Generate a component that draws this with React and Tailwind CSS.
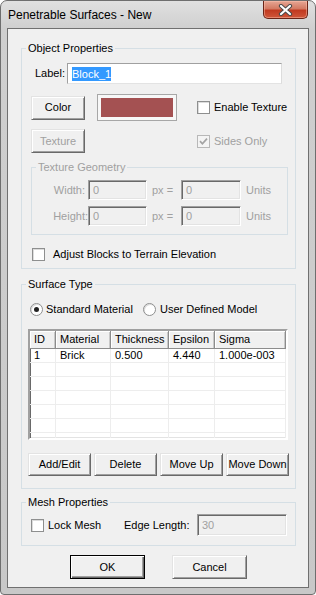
import React from 'react';

// classic win32 bevels
const raised =
  'border border-t-[#e3e3e3] border-l-[#e3e3e3] border-r-[#696969] border-b-[#696969] shadow-[inset_1px_1px_#fff,inset_-1px_-1px_#a0a0a0]';
const sunken =
  'border border-t-[#a0a0a0] border-l-[#a0a0a0] border-r-white border-b-white shadow-[inset_1px_1px_#696969,inset_-1px_-1px_#e3e3e3]';

const Btn = ({ children, className = '', disabled, isDefault }) => (
  <button
    type="button"
    className={`flex shrink-0 items-center justify-center bg-[#f0f0f0] leading-[13px] ${
      isDefault
        ? 'border border-black shadow-[inset_1px_1px_#fff,inset_-1px_-1px_#696969,inset_-2px_-2px_#a0a0a0]'
        : raised
    } ${disabled ? 'text-[#a0a0a0]' : 'text-black'} ${className}`}
  >
    {children}
  </button>
);

const CheckBox = ({ checked, disabled, className = '' }) => (
  <span
    className={`flex h-[13px] w-[13px] shrink-0 items-center justify-center border ${
      disabled ? 'border-[#b8b8b8] bg-[#f4f4f4]' : 'border-[#8e8f8f] bg-white shadow-[inset_1px_1px_#dcdcdc]'
    } ${className}`}
  >
    {checked && (
      <svg width="9" height="9" viewBox="0 0 9 9">
        <path d="M1 4.2 L3.4 6.8 L8 1.6" fill="none" stroke={disabled ? '#a3a3a3' : '#222'} strokeWidth="1.7" />
      </svg>
    )}
  </span>
);

const Radio = ({ checked }) => (
  <span className="flex h-[13px] w-[13px] shrink-0 items-center justify-center rounded-full border border-[#8e8f8f] bg-white shadow-[inset_1px_1px_#dcdcdc]">
    {checked && <span className="h-[5px] w-[5px] rounded-full bg-[#222]" />}
  </span>
);

const Group = ({ title, disabled, className = '', children }) => (
  <div className={`flex shrink-0 flex-col border border-[#d5dfe5] ${className}`}>
    <span
      className={`-mt-[7px] ml-[4px] self-start bg-[#f0f0f0] px-[2px] leading-[13px] ${
        disabled ? 'text-[#a0a0a0]' : 'text-black'
      }`}
    >
      {title}
    </span>
    {children}
  </div>
);

const GrayBox = ({ value, className = '' }) => (
  <div className={`flex shrink-0 items-center bg-[#f0f0f0] pl-[4px] text-[#a0a0a0] ${sunken} ${className}`}>{value}</div>
);

const columns = [
  { name: 'ID', w: 'w-[26px]' },
  { name: 'Material', w: 'w-[55px]' },
  { name: 'Thickness', w: 'w-[58px]' },
  { name: 'Epsilon', w: 'w-[46px]' },
  { name: 'Sigma', w: 'w-[71px]' },
];

const rows = [['1', 'Brick', '0.500', '4.440', '1.000e-003'], [], [], [], [], [], []];

export default function App() {
  return (
    <div className="h-[595px] w-[316px] overflow-hidden bg-white">
      <div className="flex h-[595px] w-[316px] flex-col rounded-t-[7px] rounded-b-[4px] border border-[#6e6e6e] bg-[linear-gradient(180deg,#e0e0e0,#cfcfcf_28px,#c8c8c8)] font-['Liberation_Sans',Arial,sans-serif] text-[11px] text-black">
        {/* Title bar */}
        <div className="flex h-[27px] shrink-0 items-start">
          <span className="pl-[7px] pt-[6px] text-[12px] leading-[16px]">Penetrable Surfaces - New</span>
          <div className="ml-auto mr-[7px] flex h-[18px] w-[45px] items-center justify-center rounded-b-[5px] border border-t-0 border-[#6a2417] bg-[linear-gradient(180deg,#e6a694,#d37a63_45%,#c13a20_55%,#d0563a)] shadow-[inset_0_0_0_1px_rgba(255,200,180,0.45)]">
            <svg width="15" height="12" viewBox="0 0 15 12">
              <path d="M3 2 L12 10 M12 2 L3 10" stroke="#4a4a4a" strokeWidth="4.2" strokeLinecap="round" />
              <path d="M3 2 L12 10 M12 2 L3 10" stroke="#fff" strokeWidth="2.2" strokeLinecap="round" />
            </svg>
          </div>
        </div>

        {/* Client area */}
        <div className="mx-[6px] flex h-[560px] shrink-0 flex-col border border-[#707070] bg-[#f0f0f0]">
          {/* Object Properties */}
          <Group title="Object Properties" className="ml-[13px] mt-[19px] h-[221px] w-[275px]">
            <div className="mt-[8px] flex h-[21px] items-center">
              <span className="ml-[13px] w-[32px]">Label:</span>
              <div className="flex h-[21px] w-[215px] items-center border border-t-[#a0a0a0] border-l-[#a0a0a0] border-r-[#dcdcdc] border-b-[#e3e3e3] bg-white pl-[4px]">
                <span className="bg-[#3399ff] leading-[14px] text-white">Block_1</span>
              </div>
            </div>

            <div className="mt-[10px] flex h-[27px] items-center">
              <Btn className="ml-[9px] h-[24px] w-[54px]">Color</Btn>
              <div className="ml-[12px] flex h-[27px] w-[80px] shrink-0 border border-[#a7a7a7] bg-[#f7f7f7] p-[3px]">
                <div className="h-full w-full bg-[#a45152]" />
              </div>
              <CheckBox className="ml-[20px]" />
              <span className="ml-[4px]">Enable Texture</span>
            </div>

            <div className="mt-[8px] flex h-[24px] items-center">
              <Btn disabled className="ml-[9px] h-[24px] w-[54px]">Texture</Btn>
              <CheckBox checked disabled className="ml-[112px]" />
              <span className="ml-[4px] text-[#a0a0a0]">Sides Only</span>
            </div>

            <Group title="Texture Geometry" disabled className="ml-[9px] mt-[14px] h-[68px] w-[257px]">
              <div className="mt-[6px] flex h-[20px] items-center text-[#a0a0a0]">
                <span className="w-[56px] pr-[3px] text-right">Width:</span>
                <GrayBox value="0" className="h-[20px] w-[59px]" />
                <span className="w-[34px] pl-[5px]">px =</span>
                <GrayBox value="0" className="h-[20px] w-[60px]" />
                <span className="ml-[5px]">Units</span>
              </div>
              <div className="mt-[6px] flex h-[20px] items-center text-[#a0a0a0]">
                <span className="w-[56px] text-right">Height:</span>
                <GrayBox value="0" className="h-[20px] w-[59px]" />
                <span className="w-[34px] pl-[5px]">px =</span>
                <GrayBox value="0" className="h-[20px] w-[60px]" />
                <span className="ml-[5px]">Units</span>
              </div>
            </Group>

            <div className="mt-[13px] flex h-[13px] items-center">
              <CheckBox className="ml-[10px]" />
              <span className="ml-[8px]">Adjust Blocks to Terrain Elevation</span>
            </div>
          </Group>

          {/* Surface Type */}
          <Group title="Surface Type" className="ml-[13px] mt-[15px] h-[205px] w-[275px]">
            <div className="mt-[12px] flex h-[13px] items-center">
              <div className="ml-[8px] flex w-[113px] items-center">
                <Radio checked />
                <span className="ml-[3px]">Standard Material</span>
              </div>
              <Radio />
              <span className="ml-[4px]">User Defined Model</span>
            </div>

            <div className={`ml-[6px] mt-[13px] flex h-[111px] w-[260px] shrink-0 flex-col overflow-hidden bg-white ${sunken} border-[2px]`}>
              <div className="flex h-[18px] shrink-0">
                {columns.map((c) => (
                  <div
                    key={c.name}
                    className={`${c.w} flex shrink-0 items-center border-r border-b border-[#8c8c8c] bg-[#f0f0f0] pl-[4px] shadow-[inset_1px_1px_#fff,inset_-1px_0_#c8c8c8]`}
                  >
                    {c.name}
                  </div>
                ))}
              </div>
              {rows.map((r, i) => (
                <div key={i} className="flex h-[14px] shrink-0 border-b border-[#ededed]">
                  {columns.map((c, j) => (
                    <div key={c.name} className={`${c.w} flex shrink-0 items-center border-r border-[#ededed] pl-[4px] leading-[13px]`}>
                      {r[j] || ''}
                    </div>
                  ))}
                </div>
              ))}
            </div>

            <div className="ml-[6px] mt-[13px] flex gap-[3px]">
              <Btn className="h-[23px] w-[63px]">Add/Edit</Btn>
              <Btn className="h-[23px] w-[63px]">Delete</Btn>
              <Btn className="h-[23px] w-[63px]">Move Up</Btn>
              <Btn className="h-[23px] w-[63px]">Move Down</Btn>
            </div>
          </Group>

          {/* Mesh Properties */}
          <Group title="Mesh Properties" className="ml-[13px] mt-[13px] h-[44px] w-[275px]">
            <div className="mt-[5px] flex h-[22px] items-center">
              <CheckBox className="ml-[9px]" />
              <span className="ml-[4px] w-[76px]">Lock Mesh</span>
              <span className="w-[73px]">Edge Length:</span>
              <GrayBox value="30" className="h-[22px] w-[90px]" />
            </div>
          </Group>

          <div className="mt-[9px] flex justify-center gap-[27px] pl-[1px]">
            <Btn isDefault className="h-[24px] w-[75px]">OK</Btn>
            <Btn className="h-[24px] w-[75px]">Cancel</Btn>
          </div>
        </div>
      </div>
    </div>
  );
}
